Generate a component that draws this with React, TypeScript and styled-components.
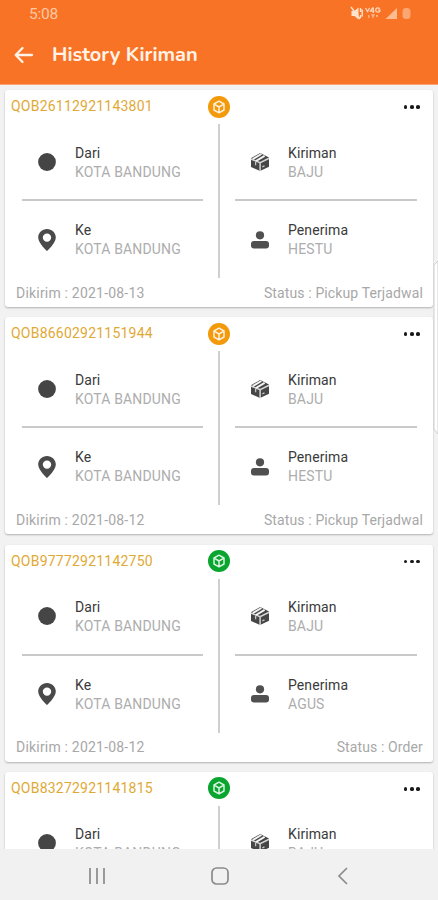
import React from "react";
import styled, { createGlobalStyle } from "styled-components";

const GlobalStyle = createGlobalStyle`
  *, *::before, *::after { box-sizing: border-box; }
  body { margin: 0; background: #f1f1f2; font-family: Roboto, "Liberation Sans", sans-serif; }
`;

const Screen = styled.div`
  position: relative;
  display: flex;
  flex-direction: column;
  width: 438px;
  height: 900px;
  overflow: hidden;
  background: #f2f2f3;
`;

const Header = styled.header`
  flex: none;
  height: 85px;
  background: #f97327;
  border-bottom: 1px solid #f9a273;
`;

const StatusBar = styled.div`
  display: flex;
  justify-content: space-between;
  align-items: center;
  height: 28px;
  padding: 0 26px 0 29px;
`;

const Clock = styled.span`
  font-size: 15.5px;
  line-height: 28px;
  letter-spacing: -0.25px;
  color: #fdc9a2;
`;

const TitleBar = styled.div`
  display: flex;
  align-items: center;
  height: 54px;
  padding-left: 14px;
`;

const Title = styled.h1`
  margin: 0 0 0 18px;
  font: 700 20px/28px Nunito, "Open Sans", sans-serif;
  color: #fff3e8;
`;

const List = styled.main`
  flex: 1;
  min-height: 0;
  overflow: hidden;
  display: flex;
  flex-direction: column;
  gap: 10.3px;
  padding: 5px 5px 0;
`;

const Card = styled.article`
  flex: none;
  display: grid;
  grid-template-rows: 34px 154px 29px;
  height: 217px;
  background: #fff;
  border-radius: 3px;
  box-shadow: 0 1px 2px rgba(0, 0, 0, 0.27);
`;

const CardTop = styled.div`
  display: grid;
  grid-template-columns: 1fr 22px 1fr;
  align-items: center;
  padding: 0 13px 1px 6px;
`;

const Code = styled.span`
  padding-bottom: 1px;
  font-size: 14px;
  line-height: 20px;
  letter-spacing: 0.22px;
  white-space: nowrap;
  color: #dfa936;
`;

const Badge = styled.span<{ $color: string }>`
  display: grid;
  place-items: center;
  width: 22px;
  height: 22px;
  margin-left: 3px;
  border-radius: 50%;
  background: ${(p) => p.$color};
`;

const Dots = styled.span`
  justify-self: end;
  display: flex;
  gap: 2.6px;
  padding-top: 1px;
  i { width: 3.7px; height: 3.7px; border-radius: 50%; background: #1a1a1a; }
`;

const Body = styled.div`
  display: grid;
  grid-template-columns: 213px 2px 213px;
`;

const Divider = styled.div`
  background: #cfcfcf;
`;

const Column = styled.div<{ $side: "left" | "right" }>`
  display: grid;
  grid-template-rows: 77px 77px;
  padding: ${(p) => (p.$side === "left" ? "0 15px 0 17px" : "0 16px 0 15px")};
`;

const Cell = styled.div<{ $line?: boolean }>`
  display: grid;
  grid-template-columns: 50px 1fr;
  align-items: center;
  padding-left: 3px;
  border-bottom: ${(p) => (p.$line ? "2px solid #c9c9c9" : "0 solid transparent")};
`;

const IconBox = styled.span`
  display: grid;
  place-items: center;
  width: 44px;
  height: 24px;
`;

const Texts = styled.div<{ $line?: boolean }>`
  padding-top: ${(p) => (p.$line ? "2px" : "1px")};
`;

const Label = styled.div`
  font-size: 14px;
  line-height: 19px;
  letter-spacing: 0.1px;
  color: #3a3a3a;
`;

const Value = styled.div`
  font-size: 14px;
  line-height: 19px;
  letter-spacing: 0.15px;
  color: #adadad;
`;

const Footer = styled.div`
  display: flex;
  justify-content: space-between;
  align-items: center;
  padding: 0 10px 0 11px;
  font-size: 14px;
  letter-spacing: 0.2px;
  color: #a8a8a8;
`;

const Status = styled.span`
  letter-spacing: 0.12px;
`;

const NavBar = styled.nav`
  flex: none;
  display: grid;
  grid-template-columns: 123px 123px 123px;
  justify-content: center;
  align-items: center;
  justify-items: center;
  height: 51px;
  padding: 3px 0 0 1px;
  background: #f1f1f2;
`;

const EdgeHandle = styled.svg`
  position: absolute;
  right: 0;
  top: 260px;
`;

const CubeIcon = () => (
  <svg width="14" height="14" viewBox="0 0 14 14" fill="none" stroke="#fff" strokeOpacity=".85" strokeWidth="1.5" strokeLinejoin="round">
    <path d="M7 1.200 12 4V10L7 12.800 2 10V4ZM2.600 4.400 7 7l4.400-2.600M7 7v5" />
  </svg>
);

const DotIcon = () => (
  <svg width="20" height="20" viewBox="0 0 20 20"><circle cx="10" cy="10" r="8.9" fill="#454545" /></svg>
);

const PinIcon = () => (
  <svg width="20" height="24" viewBox="0 0 20 24">
    <path fill="#4a4a4a" fillRule="evenodd" d="M10 1C5.100 1 1.200 4.800 1.200 9.500 1.200 15.300 10 23 10 23s8.800-7.700 8.800-13.500C18.800 4.800 14.900 1 10 1Zm0 4.400a4.200 4.200 0 1 1 0 8.400 4.200 4.200 0 0 1 0-8.400Z" />
  </svg>
);

const BoxIcon = () => (
  <svg width="20" height="20" viewBox="0 0 20 20">
    <path fill="#464646" d="M1 6.200 10.200 1 19 5.400V14.800L10 19 1 15Z" />
    <path fill="none" stroke="#d6d6d6" strokeWidth="1.500" d="m.8 7 9.300 3.600 9-4.300M10.100 10.500v8.800" />
    <path fill="none" stroke="#f4f4f4" strokeWidth="2" d="m6 9 8.600-5.200M2.800 7l8.600-5" />
    <path fill="none" stroke="#c4c4c4" strokeWidth="1.300" d="M5.600 9.200v4M12.300 14.900l2.200-1" />
  </svg>
);

const PersonIcon = () => (
  <svg width="20" height="20" viewBox="0 0 20 20" fill="#505050">
    <circle cx="10" cy="5.300" r="4.100" />
    <rect x="1" y="10.900" width="18" height="7.600" rx="3" />
  </svg>
);

const StatusIcons = () => (
  <svg width="62" height="16" viewBox="0 0 62 16" fill="#fdc9a2">
    <path d="M1.500 5h3l4-3.500v12L4.500 10h-3Z" fill="#ffe3cb" />
    <path d="m1 1 9 12M10.500 2v4M12.200 3.500v7M10.500 9v3" stroke="#ffe3cb" strokeWidth="1.400" fill="none" />
    <path d="m15.500 2 2 3.500 2-3.500M23 1.500l-2.600 3.600h4M23.300 1.500v5.500M30 2.500c-3-1.600-4.300 0-4.300 1.700 0 2.500 4.300 2.500 4.300 0h-2" stroke="#fdd5b8" strokeWidth="1.300" fill="none" />
    <path d="M18 9h1.500v3H18ZM21 8h4l-2 5ZM26 9h2v2h-2Z" opacity=".7" />
    <path d="M47 2v11H35.500Z" opacity=".85" />
    <rect x="52.500" y="2" width="8" height="11" rx="3.500" opacity=".6" />
  </svg>
);

interface Shipment {
  code: string;
  color: string;
  item: string;
  recipient: string;
  date: string;
  status: string;
}

const AMBER = "#f39a0c";
const GREEN = "#0aa52e";

const shipments: Shipment[] = [
  { code: "QOB26112921143801", color: AMBER, item: "BAJU", recipient: "HESTU", date: "2021-08-13", status: "Pickup Terjadwal" },
  { code: "QOB86602921151944", color: AMBER, item: "BAJU", recipient: "HESTU", date: "2021-08-12", status: "Pickup Terjadwal" },
  { code: "QOB97772921142750", color: GREEN, item: "BAJU", recipient: "AGUS", date: "2021-08-12", status: "Order" },
  { code: "QOB83272921141815", color: GREEN, item: "BAJU", recipient: "AGUS", date: "2021-08-12", status: "Order" },
];

const Detail = ({ icon, label, value, line }: { icon: React.ReactNode; label: string; value: string; line?: boolean }) => (
  <Cell $line={line}>
    <IconBox>{icon}</IconBox>
    <Texts $line={line}>
      <Label>{label}</Label>
      <Value>{value}</Value>
    </Texts>
  </Cell>
);

const ShipmentCard = ({ code, color, item, recipient, date, status }: Shipment) => (
  <Card>
    <CardTop>
      <Code>{code}</Code>
      <Badge $color={color}><CubeIcon /></Badge>
      <Dots><i /><i /><i /></Dots>
    </CardTop>
    <Body>
      <Column $side="left">
        <Detail icon={<DotIcon />} label="Dari" value="KOTA BANDUNG" line />
        <Detail icon={<PinIcon />} label="Ke" value="KOTA BANDUNG" />
      </Column>
      <Divider />
      <Column $side="right">
        <Detail icon={<BoxIcon />} label="Kiriman" value={item} line />
        <Detail icon={<PersonIcon />} label="Penerima" value={recipient} />
      </Column>
    </Body>
    <Footer>
      <span>Dikirim : {date}</span>
      <Status>Status : {status}</Status>
    </Footer>
  </Card>
);

export default function App() {
  return (
    <Screen>
      <GlobalStyle />
      <Header>
        <StatusBar>
          <Clock>5:08</Clock>
          <StatusIcons />
        </StatusBar>
        <TitleBar>
          <svg width="20" height="18" viewBox="0 0 20 18" fill="none" stroke="#fff3e8" strokeWidth="2.300" strokeLinecap="round" strokeLinejoin="round">
            <path d="M18 9H2M8.500 2 1.700 9l6.800 7" />
          </svg>
          <Title>History Kiriman</Title>
        </TitleBar>
      </Header>
      <List>
        {shipments.map((s) => <ShipmentCard key={s.code} {...s} />)}
      </List>
      <NavBar>
        <svg width="18" height="18" viewBox="0 0 18 18" stroke="#8b8b8b" strokeWidth="1.700"><path d="M2 1v16M9 1v16M16 1v16" /></svg>
        <svg width="18" height="18" viewBox="0 0 18 18" fill="none" stroke="#8b8b8b" strokeWidth="1.700"><rect x="1" y="1" width="16" height="16" rx="4.500" /></svg>
        <svg width="18" height="18" viewBox="0 0 18 18" fill="none" stroke="#8b8b8b" strokeWidth="1.700"><path d="M13 1 5 9l8 8" /></svg>
      </NavBar>
      <EdgeHandle width="5" height="176" viewBox="0 0 5 176">
        <path d="M5 1 1 5v164l4 5Z" fill="#fff" stroke="#cfcfcf" />
      </EdgeHandle>
    </Screen>
  );
}
